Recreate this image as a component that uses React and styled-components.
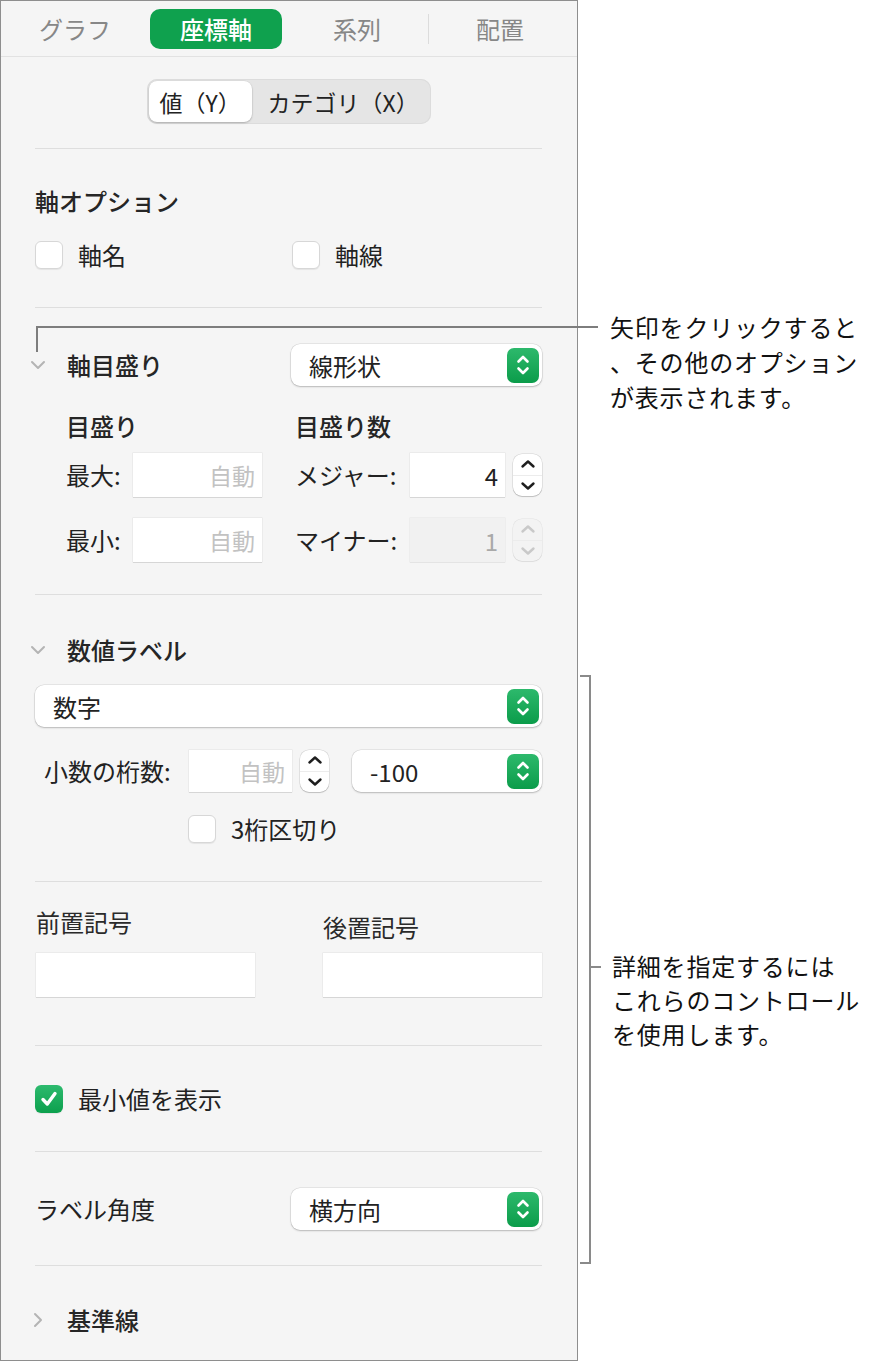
import React from 'react';
import styled, { createGlobalStyle } from 'styled-components';

const Global = createGlobalStyle`
  html, body { margin: 0; padding: 0; background: #ffffff; }
  body { font-family: "Noto Sans CJK JP", "Noto Sans", sans-serif; color: #1f1f1f; }
  * { box-sizing: border-box; }
`;

const FONT = `"Noto Sans CJK JP", "Noto Sans", sans-serif`;

const Stage = styled.div`
  position: relative;
  width: 884px;
  height: 1362px;
  background: #ffffff;
  font-family: ${FONT};
`;

const Panel = styled.div`
  width: 578px;
  background: #f5f5f5;
  border: 1px solid #8e8e8e;
  display: flex;
  flex-direction: column;
`;

const TabBar = styled.div`
  height: 56px;
  border-bottom: 1px solid #e2e2e2;
  display: flex;
  align-items: center;
  padding-left: 8px;
  column-gap: 9px;
`;

const Tab = styled.div`
  width: 132px;
  height: 40px;
  border-radius: 10px;
  display: flex;
  align-items: center;
  justify-content: center;
  font-size: 24px;
  color: ${p => (p.$active ? '#ffffff' : '#878787')};
  background: ${p => (p.$active ? '#0fa14e' : 'transparent')};
  font-weight: ${p => (p.$active ? 500 : 400)};
`;

const TabSeparator = styled.div`
  width: 1px;
  height: 30px;
  background: #dcdcdc;
  margin: 0 -4px;
`;

const Body = styled.div`
  display: flex;
  flex-direction: column;
  padding: 0 35px 0 34px;
`;

const Section = styled.div`
  display: flex;
  flex-direction: column;
  padding-top: ${p => p.$pt}px;
  padding-bottom: ${p => p.$pb}px;
`;

const Divider = styled.div`
  height: 1px;
  background: #dedede;
`;

const Segmented = styled.div`
  align-self: center;
  display: flex;
  height: 45px;
  padding: 2px;
  border-radius: 10px;
  background: #e5e5e5;
  box-shadow: inset 0 0 0 1px #dcdcdc;
`;

const Segment = styled.div`
  width: ${p => p.$w}px;
  display: flex;
  align-items: center;
  padding-left: ${p => p.$pl}px;
  border-radius: 8px;
  font-size: 23px;
  color: #222;
  white-space: nowrap;
  background: ${p => (p.$selected ? '#ffffff' : 'transparent')};
  box-shadow: ${p => (p.$selected ? '0 1px 2px rgba(0,0,0,0.22), 0 0 0 0.5px rgba(0,0,0,0.06)' : 'none')};
`;

const Heading = styled.div`
  font-size: 24px;
  line-height: 30px;
  height: 30px;
  font-weight: ${p => (p.$strong ? 500 : 400)};
  color: ${p => (p.$strong ? '#262626' : '#2a2a2a')};
  white-space: nowrap;
  margin-top: ${p => p.$drop || 0}px;
  margin-bottom: ${p => -(p.$drop || 0)}px;
`;

const Label = styled.div`
  font-size: 24px;
  line-height: 30px;
  color: #222;
  white-space: nowrap;
  width: ${p => (p.$w ? `${p.$w}px` : 'auto')};
  flex-shrink: 0;
`;

const CheckGrid = styled.div`
  display: grid;
  grid-template-columns: 257px 1fr;
  margin-top: 24px;
`;

const CheckItem = styled.div`
  display: flex;
  align-items: center;
  gap: 15px;
  height: 30px;
  padding-left: ${p => p.$indent || 0}px;
  margin-top: ${p => p.$mt || 0}px;
`;

const Box = styled.div`
  width: 28px;
  height: 28px;
  border-radius: 6px;
  flex-shrink: 0;
  display: flex;
  align-items: center;
  justify-content: center;
  background: ${p => (p.$checked ? 'linear-gradient(#2dba6e, #0ca04d)' : '#ffffff')};
  border: ${p => (p.$checked ? 'none' : '1px solid #d7d7d7')};
  box-shadow: 0 1px 1px rgba(0,0,0,0.07);
`;

const SpreadRow = styled.div`
  display: flex;
  align-items: center;
  justify-content: space-between;
  height: 42px;
`;

const Disclosure = styled.div`
  display: flex;
  align-items: center;
  margin-left: -6px;
  gap: 20px;
  height: 30px;
`;

const ChevronBox = styled.div`
  width: 18px;
  display: flex;
  justify-content: center;
  align-items: center;
`;

const Popup = styled.div`
  width: ${p => (p.$w ? `${p.$w}px` : '100%')};
  height: 42px;
  margin-top: ${p => p.$mt || 0}px;
  margin-left: ${p => p.$ml || 0}px;
  border-radius: 9px;
  background: #ffffff;
  box-shadow: 0 0 0 0.5px rgba(0,0,0,0.12), 0 1px 2px rgba(0,0,0,0.2);
  display: flex;
  align-items: center;
  justify-content: space-between;
  padding: 0 3px 0 18px;
  font-size: 24px;
  color: #222;
  flex-shrink: 0;
`;

const GreenButton = styled.div`
  width: 32px;
  height: 35px;
  border-radius: 7px;
  background: linear-gradient(#2db96c, #0b9c4a);
  display: flex;
  align-items: center;
  justify-content: center;
`;

const TickArea = styled.div`
  display: flex;
  padding-left: 31px;
  margin-top: 25px;
`;

const TickColumn = styled.div`
  display: flex;
  flex-direction: column;
  width: ${p => (p.$w ? `${p.$w}px` : 'auto')};
  gap: 21px;
  & > ${Heading} { margin-bottom: -9px; }
`;

const FieldRow = styled.div`
  display: flex;
  align-items: center;
  height: ${p => p.$h || 44}px;
  margin-top: ${p => p.$mt || 0}px;
  padding-left: ${p => p.$indent || 0}px;
`;

const Field = styled.div`
  width: ${p => (p.$w ? `${p.$w}px` : '100%')};
  height: ${p => p.$h || 44}px;
  margin-top: ${p => p.$mt || 0}px;
  background: ${p => (p.$disabled ? '#f1f1f1' : '#ffffff')};
  box-shadow: 0 0 0 0.5px ${p => (p.$disabled ? '#e6e6e6' : '#e2e2e2')}, 0 1px 0 ${p => (p.$disabled ? '#e2e2e2' : '#cbcbcb')};
  display: flex;
  align-items: center;
  justify-content: flex-end;
  padding-right: 7px;
  font-size: ${p => (p.$placeholder ? 23 : 24)}px;
  color: ${p => (p.$placeholder ? '#c2c2c2' : p.$disabled ? '#a9a9a9' : '#1f1f1f')};
  flex-shrink: 0;
`;

const Stepper = styled.div`
  width: 29px;
  height: 42px;
  margin-left: 8px;
  border-radius: 9px;
  background: ${p => (p.$disabled ? '#f3f3f3' : '#ffffff')};
  box-shadow: 0 0 0 0.5px rgba(0,0,0,${p => (p.$disabled ? 0.08 : 0.14)}), 0 1px 1px rgba(0,0,0,${p => (p.$disabled ? 0.06 : 0.16)});
  display: flex;
  flex-direction: column;
  flex-shrink: 0;
`;

const StepHalf = styled.div`
  flex: 1;
  display: flex;
  align-items: center;
  justify-content: center;
  & + & { border-top: 1px solid ${p => (p.$disabled ? '#ececec' : '#e4e4e4')}; }
`;

const FixGrid = styled.div`
  display: grid;
  grid-template-columns: 1fr 1fr;
  column-gap: 68px;
  padding-left: 1px;
`;

const FixColumn = styled.div`
  display: flex;
  flex-direction: column;
`;

/* annotation layer */
const LeaderH = styled.div`
  position: absolute;
  left: 36px;
  top: 326px;
  width: 562px;
  height: 2px;
  background: #7d7d7d;
`;

const LeaderV = styled.div`
  position: absolute;
  left: 36px;
  top: 326px;
  width: 2px;
  height: 26px;
  background: #7d7d7d;
`;

const Bracket = styled.div`
  position: absolute;
  left: 580px;
  top: 675px;
  width: 11px;
  height: 589px;
  border: 2px solid #8a8a8a;
  border-left: none;
  &::after {
    content: '';
    position: absolute;
    left: 9px;
    top: 289px;
    width: 12px;
    height: 2px;
    background: #8a8a8a;
  }
`;

const Callout = styled.div`
  position: absolute;
  left: ${p => p.$x}px;
  top: ${p => p.$y}px;
  font-size: 24px;
  line-height: ${p => p.$lh}px;
  color: #111;
  white-space: nowrap;
  letter-spacing: 0.8px;
`;

const Updown = ({ color = '#fff', w = 2.6 }) => (
  <svg width="16" height="24" viewBox="0 0 16 24" fill="none">
    <path d="M3.5 8.5 L8 4 L12.5 8.5" stroke={color} strokeWidth={w} strokeLinecap="round" strokeLinejoin="round" />
    <path d="M3.5 15.5 L8 20 L12.5 15.5" stroke={color} strokeWidth={w} strokeLinecap="round" strokeLinejoin="round" />
  </svg>
);

const PopupButton = ({ w, mt, ml, children }) => (
  <Popup $w={w} $mt={mt} $ml={ml}>
    <span>{children}</span>
    <GreenButton>
      <Updown />
    </GreenButton>
  </Popup>
);

const StepperControl = ({ disabled }) => {
  const c = disabled ? '#c9c9c9' : '#1e1e1e';
  return (
    <Stepper $disabled={disabled}>
      <StepHalf $disabled={disabled}>
        <svg width="16" height="10" viewBox="0 0 16 10" fill="none">
          <path d="M2.5 7.5 L8 2.5 L13.5 7.5" stroke={c} strokeWidth="2.4" strokeLinecap="round" strokeLinejoin="round" />
        </svg>
      </StepHalf>
      <StepHalf $disabled={disabled}>
        <svg width="16" height="10" viewBox="0 0 16 10" fill="none">
          <path d="M2.5 2.5 L8 7.5 L13.5 2.5" stroke={c} strokeWidth="2.4" strokeLinecap="round" strokeLinejoin="round" />
        </svg>
      </StepHalf>
    </Stepper>
  );
};

const Check = ({ checked, label, indent, mt }) => (
  <CheckItem $indent={indent} $mt={mt}>
    <Box $checked={checked}>
      {checked && (
        <svg width="22" height="22" viewBox="0 0 22 22" fill="none">
          <path d="M5 11.5 L9.3 16 L17 5.5" stroke="#fff" strokeWidth="3.4" strokeLinecap="round" strokeLinejoin="round" />
        </svg>
      )}
    </Box>
    <Label>{label}</Label>
  </CheckItem>
);

const Chevron = ({ dir }) => (
  <ChevronBox>
    {dir === 'down' ? (
      <svg width="16" height="10" viewBox="0 0 16 10" fill="none">
        <path d="M2 2 L8 8 L14 2" stroke="#b4b4b4" strokeWidth="2" strokeLinecap="round" strokeLinejoin="round" />
      </svg>
    ) : (
      <svg width="10" height="16" viewBox="0 0 10 16" fill="none">
        <path d="M2 2 L8 8 L2 14" stroke="#b4b4b4" strokeWidth="2" strokeLinecap="round" strokeLinejoin="round" />
      </svg>
    )}
  </ChevronBox>
);

export default function App() {
  return (
    <Stage>
      <Global />
      <Panel>
        <TabBar>
          <Tab>グラフ</Tab>
          <Tab $active>座標軸</Tab>
          <Tab>系列</Tab>
          <TabSeparator />
          <Tab>配置</Tab>
        </TabBar>
        <Body>
          <Section $pt={22} $pb={24}>
            <Segmented>
              <Segment $w={103} $pl={11} $selected>値（Y）</Segment>
              <Segment $w={177} $pl={16}>カテゴリ（X）</Segment>
            </Segmented>
          </Section>
          <Divider />
          <Section $pt={37} $pb={37}>
            <Heading $strong>軸オプション</Heading>
            <CheckGrid>
              <Check label="軸名" />
              <Check label="軸線" />
            </CheckGrid>
          </Section>
          <Divider />
          <Section $pt={36} $pb={32}>
            <SpreadRow>
              <Disclosure>
                <Chevron dir="down" />
                <Heading $strong>軸目盛り</Heading>
              </Disclosure>
              <PopupButton w={251}>線形状</PopupButton>
            </SpreadRow>
            <TickArea>
              <TickColumn $w={233}>
                <Heading $strong>目盛り</Heading>
                <FieldRow>
                  <Label $w={67}>最大:</Label>
                  <Field $w={129} $placeholder>自動</Field>
                </FieldRow>
                <FieldRow>
                  <Label $w={67}>最小:</Label>
                  <Field $w={129} $placeholder>自動</Field>
                </FieldRow>
              </TickColumn>
              <TickColumn>
                <Heading $strong>目盛り数</Heading>
                <FieldRow>
                  <Label $w={115}>メジャー:</Label>
                  <Field $w={95}>4</Field>
                  <StepperControl />
                </FieldRow>
                <FieldRow>
                  <Label $w={115}>マイナー:</Label>
                  <Field $w={95} $disabled>1</Field>
                  <StepperControl disabled />
                </FieldRow>
              </TickColumn>
            </TickArea>
          </Section>
          <Divider />
          <Section $pt={40} $pb={37}>
            <Disclosure>
              <Chevron dir="down" />
              <Heading $strong>数値ラベル</Heading>
            </Disclosure>
            <PopupButton mt={20}>数字</PopupButton>
            <FieldRow $h={42} $mt={23} $indent={9}>
              <Label $w={145}>小数の桁数:</Label>
              <Field $w={103} $h={42} $placeholder>自動</Field>
              <StepperControl />
              <PopupButton w={190} ml={23}>-100</PopupButton>
            </FieldRow>
            <Check label="3桁区切り" indent={153} mt={22} />
          </Section>
          <Divider />
          <Section $pt={25} $pb={48}>
            <FixGrid>
              <FixColumn>
                <Heading>前置記号</Heading>
                <Field $mt={16} />
              </FixColumn>
              <FixColumn>
                <Heading $drop={5}>後置記号</Heading>
                <Field $mt={16} />
              </FixColumn>
            </FixGrid>
          </Section>
          <Divider />
          <Section $pt={38} $pb={37}>
            <Check checked label="最小値を表示" />
          </Section>
          <Divider />
          <Section $pt={36} $pb={35}>
            <SpreadRow>
              <Label>ラベル角度</Label>
              <PopupButton w={251}>横方向</PopupButton>
            </SpreadRow>
          </Section>
          <Divider />
          <Section $pt={39} $pb={25}>
            <Disclosure>
              <Chevron dir="right" />
              <Heading $strong>基準線</Heading>
            </Disclosure>
          </Section>
        </Body>
      </Panel>

      <LeaderH />
      <LeaderV />
      <Callout $x={610} $y={309} $lh={35}>
        矢印をクリックすると
        <br />
        、その他のオプション
        <br />
        が表示されます。
      </Callout>

      <Bracket />
      <Callout $x={612} $y={949} $lh={34}>
        詳細を指定するには
        <br />
        これらのコントロール
        <br />
        を使用します。
      </Callout>
    </Stage>
  );
}
